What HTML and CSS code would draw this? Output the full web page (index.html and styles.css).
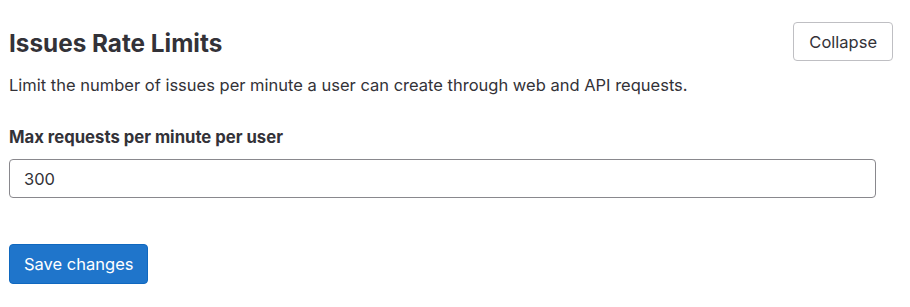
FILE: index.html
```html
<!DOCTYPE html>
<html lang="en">
<head>
    <meta charset="UTF-8">
    <title>Issues Rate Limits</title>
    <link rel="stylesheet" href="styles.css">
</head>
<body>
    <section class="settings">
        <div class="settings-header">
            <div>
                <h4 class="settings-title">Issues Rate Limits</h4>
                <p class="settings-desc">Limit the number of issues per minute a user can create through web and API requests.</p>
            </div>
            <button class="btn btn-default">Collapse</button>
        </div>
        <form class="settings-content">
            <div class="form-group">
                <label for="issuesLimit">Max requests per minute per user</label>
                <input id="issuesLimit" type="number" class="form-control" value="300">
            </div>
            <button type="button" class="btn btn-confirm">Save changes</button>
        </form>
    </section>
</body>
</html>
```
FILE: styles.css
```css
body {
    font-family: Inter, "Noto Sans", sans-serif;
    font-size: 16.5px;
    color: #333238;
    margin: 0;
    padding: 0;
    background-color: #fff;
}
.settings {
    padding: 22px 17px 0 9px;
}
.settings-header {
    display: flex;
    justify-content: space-between;
    align-items: flex-start;
}
.settings-title {
    font-size: 24.3px;
    font-weight: 700;
    margin: 6px 0 0 0;
    line-height: 30px;
}
.settings-desc {
    margin: 16px 0 0 0;
    line-height: 22px;
}
.settings-content {
    padding-right: 17px;
}
.form-group {
    margin-top: 30px;
}
.form-group label {
    display: block;
    font-weight: 700;
    font-size: 16.7px;
    line-height: 22px;
    margin-bottom: 11px;
}
.form-control {
    box-sizing: border-box;
    width: 100%;
    height: 39px;
    padding: 0 14px;
    font-family: inherit;
    font-size: 16.5px;
    color: #333238;
    border: 1px solid #89888d;
    border-radius: 4px;
    -moz-appearance: textfield;
}
.form-control::-webkit-inner-spin-button {
    -webkit-appearance: none;
}
.btn {
    font-family: inherit;
    font-size: 16.5px;
    border-radius: 4px;
    height: 39px;
    padding: 0 15px;
    cursor: pointer;
}
.btn-default {
    background-color: #fff;
    color: #333238;
    border: 1px solid #bfbfc3;
}
.btn-confirm {
    margin-top: 46px;
    height: 40px;
    padding: 0 14px;
    background-color: #1f75cb;
    color: #fff;
    border: 1px solid #1068bf;
}
```
